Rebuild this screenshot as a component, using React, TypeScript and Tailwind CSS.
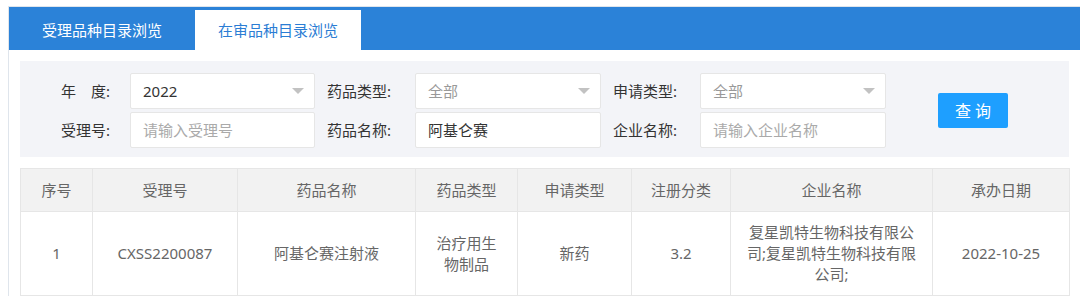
const font = { fontFamily: '"Noto Sans", "Noto Sans CJK SC", sans-serif' }

// table columns, widths in px
const columns = [
  { title: '序号', width: 72 },
  { title: '受理号', width: 145 },
  { title: '药品名称', width: 178 },
  { title: '药品类型', width: 102 },
  { title: '申请类型', width: 114 },
  { title: '注册分类', width: 99 },
  { title: '企业名称', width: 202 },
  { title: '承办日期', width: 137 },
]

const rows = [
  [
    '1',
    'CXSS2200087',
    '阿基仑赛注射液',
    '治疗用生物制品',
    '新药',
    '3.2',
    '复星凯特生物科技有限公司;复星凯特生物科技有限公司;',
    '2022-10-25',
  ],
]

function SelectBox({ value, muted }: { value: string; muted?: boolean }) {
  return (
    <div className="flex h-[36px] w-full items-center justify-between rounded-[2px] border border-[#e6e6e6] bg-white pl-[12px] pr-[10px]">
      <span className={`text-[15px] ${muted ? 'text-[#999]' : 'text-[#333]'}`}>{value}</span>
      <span className="h-0 w-0 border-x-[6px] border-t-[6px] border-x-transparent border-t-[#c2c2c2]" />
    </div>
  )
}

function TextBox({ value, placeholder }: { value?: string; placeholder?: string }) {
  return (
    <div className="flex h-[36px] w-full items-center rounded-[2px] border border-[#e6e6e6] bg-white pl-[12px]">
      {value ? (
        <span className="text-[15px] text-[#333]">{value}</span>
      ) : (
        <span className="text-[15px] text-[#aaa]">{placeholder}</span>
      )}
    </div>
  )
}

export default function App() {
  return (
    <div className="min-h-screen bg-white pl-[8px] pt-[6px]" style={font}>
      <div className="border-l border-t border-[#dfe5ec]">
        {/* Tabs */}
        <div className="flex h-[43px] items-end bg-[#2b82d8]">
          <div className="flex h-[40px] w-[186px] items-center justify-center text-[15px] text-white">
            受理品种目录浏览
          </div>
          <div className="flex h-[40px] w-[166px] items-center justify-center bg-white text-[15px] text-[#2b7dd4]">
            在审品种目录浏览
          </div>
        </div>

        <div className="px-[11px] pt-[11px]">
          {/* Filters */}
          <div className="flex items-center bg-[#f3f4f8] pb-[9px] pt-[12px]">
            <div className="flex flex-col gap-[3px]">
              <div className="flex items-center">
                <div className="w-[110px] pr-[20px] text-right text-[15px] text-[#333]">年　度:</div>
                <div className="w-[185px]">
                  <SelectBox value="2022" />
                </div>
                <div className="w-[100px] pl-[12px] text-[15px] text-[#333]">药品类型:</div>
                <div className="w-[186px]">
                  <SelectBox value="全部" muted />
                </div>
                <div className="w-[99px] pl-[12px] text-[15px] text-[#333]">申请类型:</div>
                <div className="w-[186px]">
                  <SelectBox value="全部" muted />
                </div>
              </div>
              <div className="flex items-center">
                <div className="w-[110px] pr-[20px] text-right text-[15px] text-[#333]">受理号:</div>
                <div className="w-[185px]">
                  <TextBox placeholder="请输入受理号" />
                </div>
                <div className="w-[100px] pl-[12px] text-[15px] text-[#333]">药品名称:</div>
                <div className="w-[186px]">
                  <TextBox value="阿基仑赛" />
                </div>
                <div className="w-[99px] pl-[12px] text-[15px] text-[#333]">企业名称:</div>
                <div className="w-[186px]">
                  <TextBox placeholder="请输入企业名称" />
                </div>
              </div>
            </div>
            <button className="ml-[52px] flex h-[35px] w-[70px] items-center justify-center rounded-[2px] bg-[#1e9fff] text-[16px] text-white">
              查 询
            </button>
          </div>

          {/* Table */}
          <table className="mt-[11px] w-full table-fixed border-collapse text-center">
            <colgroup>
              {columns.map((c) => (
                <col key={c.title} style={{ width: c.width }} />
              ))}
            </colgroup>
            <thead>
              <tr className="h-[43px] bg-[#f2f2f2]">
                {columns.map((c) => (
                  <th key={c.title} className="border border-[#e6e6e6] text-[15px] font-normal text-[#666]">
                    {c.title}
                  </th>
                ))}
              </tr>
            </thead>
            <tbody>
              {rows.map((r, i) => (
                <tr key={i}>
                  {r.map((cell, j) => (
                    <td
                      key={j}
                      className={`break-all border border-[#e6e6e6] py-[10px] text-[15px] leading-[21px] text-[#666] ${
                        j === 6 ? 'px-[12px]' : 'px-[18px]'
                      }`}
                    >
                      {cell}
                    </td>
                  ))}
                </tr>
              ))}
            </tbody>
          </table>
        </div>
      </div>
    </div>
  )
}
